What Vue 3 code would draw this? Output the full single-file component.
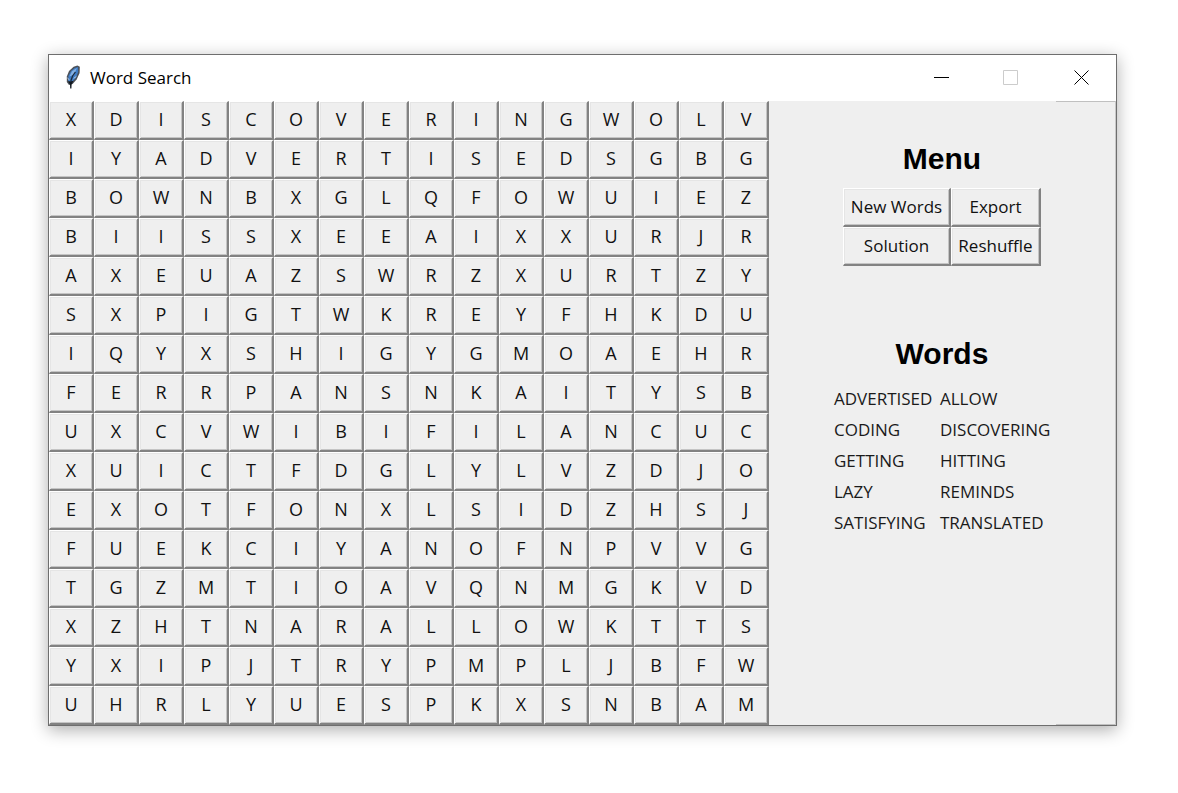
<script setup>
import { ref } from 'vue'

const rows = [
  'XDISCOVERINGWOLV',
  'IYADVERTISEDSGBG',
  'BOWNBXGLQFOWUIEZ',
  'BIISSXEEAIXXURJR',
  'AXEUAZSWRZXURTZY',
  'SXPIGTWKREYFHKDU',
  'IQYXSHIGYGMOAEHR',
  'FERRPANSNKAITYSB',
  'UXCVWIBIFILANCUC',
  'XUICTFDGLYLVZDJO',
  'EXOTFONXLSIDZHSJ',
  'FUEKCIYANOFNPVVG',
  'TGZMTIOAVQNMGKVD',
  'XZHTNARALLOWKTTS',
  'YXIPJTRYPMPLJBFW',
  'UHRLYUESPKXSNBAM'
]
const letters = ref(rows.join('').split(''))
const actions = ['New Words', 'Export', 'Solution', 'Reshuffle']
const words = [
  'ADVERTISED', 'ALLOW',
  'CODING', 'DISCOVERING',
  'GETTING', 'HITTING',
  'LAZY', 'REMINDS',
  'SATISFYING', 'TRANSLATED'
]
</script>

<template>
  <div class="desktop">
    <main class="window">
      <header class="titlebar">
        <svg class="feather" width="16" height="26" viewBox="0 0 16 26" aria-hidden="true">
          <path d="M4 20 1.8 17 1.8 11.5 4 6 8.6 1.8 12.4.6 14.8 1.8 14.6 8 11.6 14.4 7.6 19Z" fill="#4c5158" />
          <path d="M3.2 16 3.4 11 6 6 9.6 3 13 2 13.2 7 10.8 13 6.4 17.4Z" fill="#3f7cc4" />
          <path d="M4.4 11.4 7 6.2 12 3 9 9.4Z" fill="#84b0e2" />
          <path d="M10.4 7 7.6 11 5.8 16" fill="none" stroke="#1c2a3c" stroke-width="1.3" />
          <path d="M3 16.6 8.4 16 6.6 19.4 6.4 23.6 5.2 23.6 5 19.6Z" fill="#111820" />
          <path d="M2.4 12.6 4.4 15.2M11.4 11.4 8.6 13.4" fill="none" stroke="#dbe7f4" stroke-width=".7" />
        </svg>
        <h1>Word Search</h1>
        <div class="controls">
          <button type="button" aria-label="Minimize">
            <svg width="16" height="16" viewBox="0 0 16 16"><path d="M1 7.5H16" /></svg>
          </button>
          <button type="button" aria-label="Maximize" disabled>
            <svg width="16" height="16" viewBox="0 0 16 16"><path d="M.5.5h14v14H.5z" /></svg>
          </button>
          <button type="button" aria-label="Close">
            <svg width="16" height="16" viewBox="0 0 16 16"><path d="M1.5.5l14 14M15.5.5l-14 14" /></svg>
          </button>
        </div>
      </header>
      <div class="body">
        <div class="board">
          <button v-for="(letter, i) in letters" :key="i" type="button" class="raised">{{ letter }}</button>
        </div>
        <aside class="side">
          <h2>Menu</h2>
          <div class="menu">
            <button v-for="action in actions" :key="action" type="button" class="raised">{{ action }}</button>
          </div>
          <h2>Words</h2>
          <ul class="words">
            <li v-for="word in words" :key="word">{{ word }}</li>
          </ul>
        </aside>
      </div>
    </main>
  </div>
</template>

<style>
body {
  margin: 0;
  background: #fff;
}
</style>

<style scoped>
.desktop {
  box-sizing: border-box;
  min-height: 100vh;
  padding: 54px 61px 0 48px;
  color: #000;
  font-family: "Open Sans", "Noto Sans", sans-serif;
}
.window {
  border: 1px solid #6e6e6e;
  background: #efefef;
  box-shadow: 0 4px 16px rgba(0, 0, 0, 0.32);
}
.titlebar {
  display: flex;
  align-items: center;
  height: 46px;
  padding-left: 16px;
  background: #fff;
}
.feather {
  margin-right: 9px;
}
h1 {
  margin: 0;
  font-size: 17px;
  font-weight: 400;
  line-height: 24px;
}
.controls {
  display: flex;
  align-self: stretch;
  margin-left: auto;
}
.controls button {
  display: flex;
  align-items: center;
  justify-content: center;
  width: 70px;
  padding: 0;
  border: 0;
  background: none;
}
.controls path {
  fill: none;
  stroke: #000;
}
.controls button:disabled path {
  stroke: #ccc;
}
.body {
  display: flex;
}
.board {
  display: grid;
  grid-template-columns: repeat(16, 45px);
  grid-auto-rows: 39px;
}
.raised {
  padding: 0;
  border: solid;
  border-width: 1px 2px 2px 1px;
  border-color: #fff #828282 #828282 #fff;
  background: #efefef;
  box-shadow: inset 1px 1px #e5e5e5, inset -1px -1px #c4c4c4;
  color: #111;
  font-family: inherit;
  font-size: 17px;
  line-height: 24px;
}
.board .raised {
  padding-bottom: 2px;
  font-size: 18px;
}
.side {
  position: relative;
  display: flex;
  flex: 1;
  flex-direction: column;
  align-items: center;
  border-right: 1px solid #c8c8c8;
}
.side::before,
.side::after {
  content: "";
  position: absolute;
  right: 0;
  width: 59px;
  height: 1px;
  background: #c0c0c0;
}
.side::before {
  top: 0;
}
.side::after {
  bottom: 0;
}
h2 {
  margin: 40px 0 11px;
  font-family: "Liberation Sans", Arial, sans-serif;
  font-size: 30px;
  font-weight: 700;
  line-height: 36px;
}
.menu {
  display: grid;
  grid-template-columns: 108px 90px;
  grid-auto-rows: 39px;
  margin-bottom: 30px;
}
.words {
  display: grid;
  grid-template-columns: 106px 110px;
  grid-auto-rows: 31px;
  margin: 0;
  padding: 0;
  list-style: none;
  color: #1a1a1a;
  font-size: 17px;
  line-height: 32px;
}
</style>
